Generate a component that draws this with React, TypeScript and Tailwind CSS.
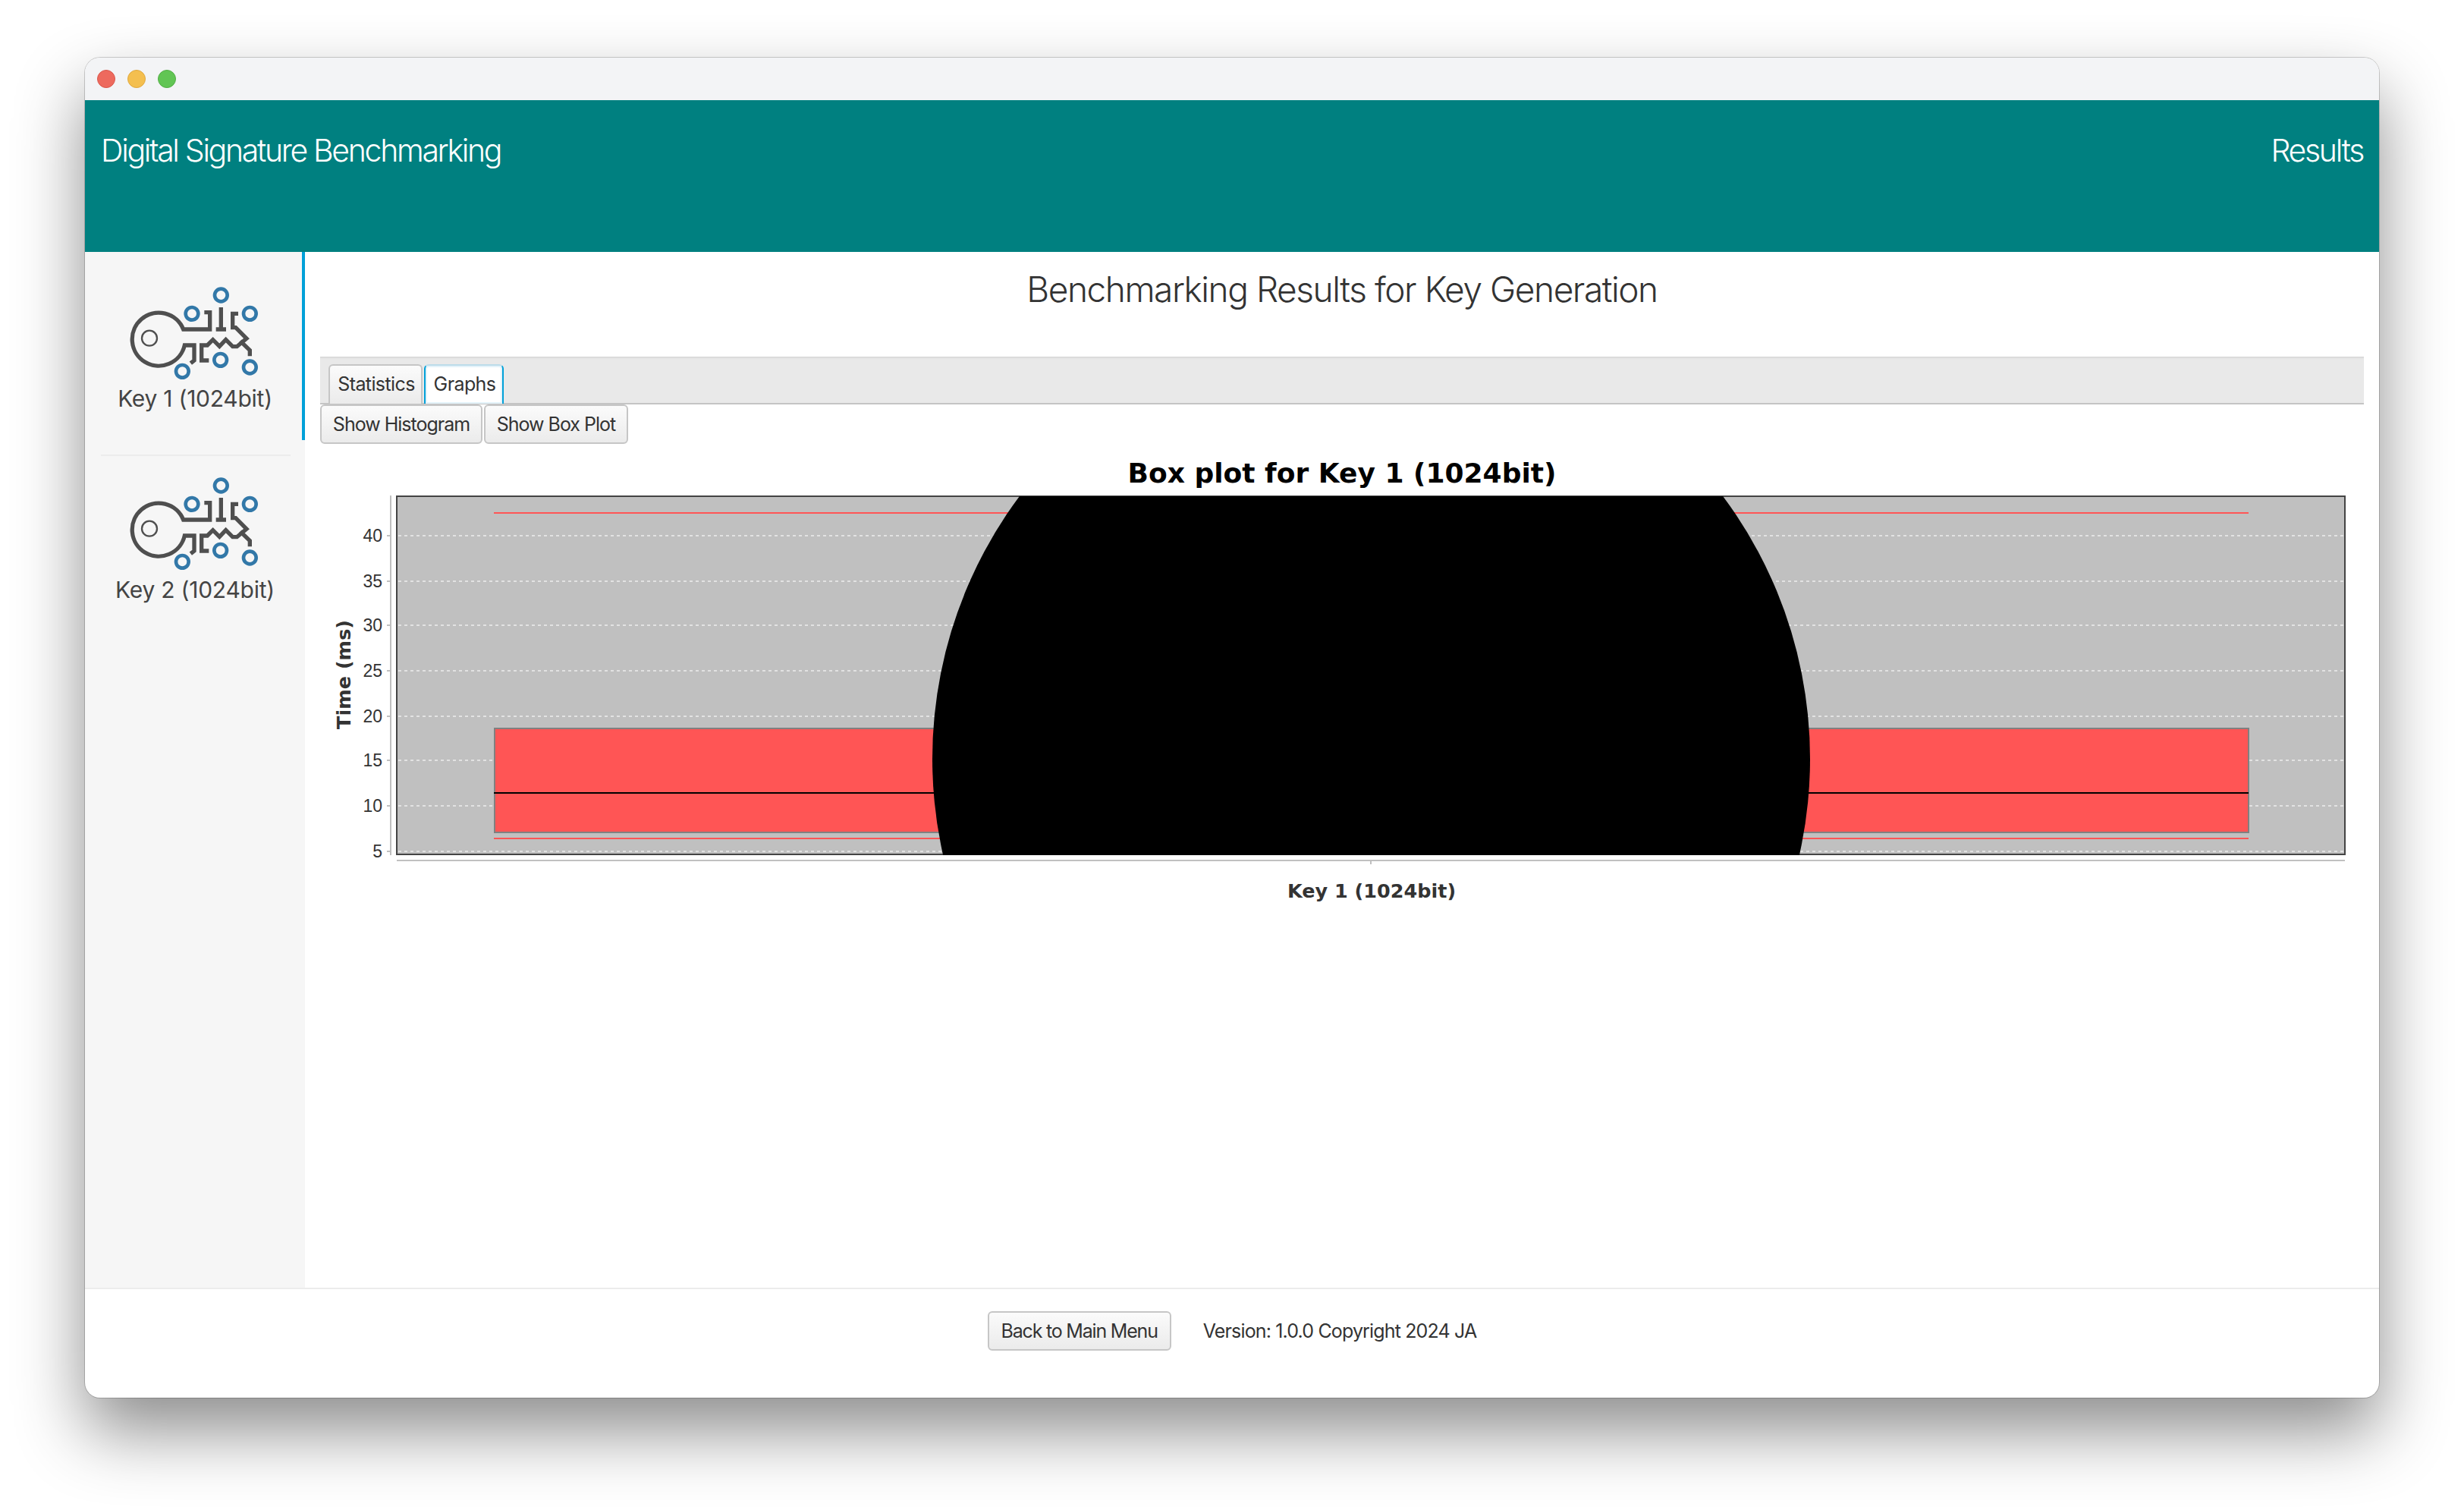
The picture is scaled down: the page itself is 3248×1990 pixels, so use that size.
import React from 'react';

const FONT = "font-['Inter','Noto_Sans',sans-serif]";

function KeyIcon() {
  const blue = [
    [484, 87],
    [369, 160],
    [598, 160],
    [482, 343],
    [598, 372],
    [331, 388],
  ];
  return (
    <svg className="mr-[14px] shrink-0" width="240" height="170" viewBox="0 0 720 510" fill="none">
      <g stroke="#4f4f4f" strokeWidth="16">
        <path d="M418 155H440V222H335A105 105 0 1 0 340 285H378V345L364 356" />
        <path d="M484 135V222M464 222H504" />
        <path d="M552 160H530V215H542L585 258L547 290H530L503 263L478 289L452 263L430 285H407V345H436" />
        <path d="M560 268L598 305V328" />
      </g>
      <circle cx="201" cy="257" r="30" stroke="#4f4f4f" strokeWidth="7" fill="none" />
      {blue.map(([cx, cy]) => (
        <circle key={`${cx}-${cy}`} cx={cx} cy={cy} r="25" stroke="#3278a8" strokeWidth="14" />
      ))}
    </svg>
  );
}

function ActionButton({ label, className }: { label: string; className?: string }) {
  return (
    <button
      className={`flex h-[52px] items-center justify-center rounded-[6px] border-2 border-[#c6c6c6] bg-gradient-to-b from-[#fbfbfb] to-[#ebebeb] pt-[1px] text-[25px] text-[#333] ${className ?? ''}`}
    >
      {label}
    </button>
  );
}

function BoxPlot() {
  const ticks = [
    { label: '40', y: 706 },
    { label: '35', y: 766 },
    { label: '30', y: 824 },
    { label: '25', y: 884 },
    { label: '20', y: 944 },
    { label: '15', y: 1002 },
    { label: '10', y: 1062 },
    { label: '5', y: 1122 },
  ];
  return (
    <svg className="mt-[5px] block" width="2694" height="620" viewBox="422 590 2694 620">
      <defs>
        <clipPath id="plot-area">
          <rect x="523" y="654" width="2568" height="473" />
        </clipPath>
      </defs>
      <text
        x="1769"
        y="636"
        textAnchor="middle"
        fontFamily="DejaVu Sans"
        fontWeight="700"
        fontSize="36"
        fill="#000"
      >
        Box plot for Key 1 (1024bit)
      </text>

      <rect x="523" y="654" width="2568" height="472" fill="#c0c0c0" stroke="#444" strokeWidth="2" />
      {ticks.map((t) => (
        <g key={t.label}>
          <line x1="525" x2="3089" y1={t.y} y2={t.y} stroke="#e2e2e2" strokeWidth="2" strokeDasharray="4 4" />
          <line x1="510" x2="515" y1={t.y} y2={t.y} stroke="#c0c0c0" strokeWidth="2" />
          <text x="504" y={t.y + 8} textAnchor="end" fontFamily="Liberation Sans" fontSize="23" fill="#333">
            {t.label}
          </text>
        </g>
      ))}
      <line x1="515" x2="515" y1="653" y2="1127" stroke="#c0c0c0" strokeWidth="2" />
      <line x1="523" x2="3091" y1="1134" y2="1134" stroke="#c0c0c0" strokeWidth="2" />
      <line x1="1807" x2="1807" y1="1134" y2="1139" stroke="#c0c0c0" strokeWidth="2" />

      <line x1="651" x2="2964" y1="676" y2="676" stroke="#ff5555" strokeWidth="2" />
      <line x1="651" x2="2964" y1="1105" y2="1105" stroke="#ff5555" strokeWidth="2" />
      <rect x="652" y="960" width="2312" height="137" fill="#ff5555" stroke="#808080" strokeWidth="2" />
      <line x1="651" x2="2964" y1="1045" y2="1045" stroke="#000" strokeWidth="2" />
      <circle cx="1807.5" cy="1000" r="578.5" fill="#000" clipPath="url(#plot-area)" />

      <text
        transform="translate(462 889) rotate(-90)"
        textAnchor="middle"
        fontFamily="DejaVu Sans"
        fontWeight="700"
        fontSize="25.5"
        fill="#333"
      >
        Time (ms)
      </text>
      <text
        x="1808"
        y="1183"
        textAnchor="middle"
        fontFamily="DejaVu Sans"
        fontWeight="700"
        fontSize="25.5"
        fill="#333"
      >
        Key 1 (1024bit)
      </text>
    </svg>
  );
}

export default function App() {
  return (
    <div className={`h-[1990px] w-[3248px] bg-white pl-[112px] pt-[76px] ${FONT}`}>
      <div className="flex h-[1766px] w-[3024px] flex-col overflow-hidden rounded-[20px] bg-white shadow-[0_0_0_1px_rgba(0,0,0,0.18),0_44px_90px_rgba(0,0,0,0.45)]">
        {/* Title bar */}
        <div className="flex h-[56px] shrink-0 items-center gap-4 bg-[#f3f4f6] pl-4">
          <div className="h-6 w-6 rounded-full border border-[#d9574c] bg-[#ed6a5e]" />
          <div className="h-6 w-6 rounded-full border border-[#dfa83f] bg-[#f4bf4f]" />
          <div className="h-6 w-6 rounded-full border border-[#52ae46] bg-[#61c554]" />
        </div>

        {/* Header */}
        <div className="flex h-[200px] shrink-0 items-start justify-between bg-[#008080] px-[21px] pt-[41px] text-[41px] font-light leading-[50px] tracking-[-2.33px] text-white">
          <span>Digital Signature Benchmarking</span>
          <span>Results</span>
        </div>

        <div className="flex min-h-0 flex-1">
          {/* Sidebar */}
          <div className="flex w-[290px] shrink-0 flex-col bg-[#f6f6f6]">
            <div className="flex h-[248px] flex-col items-center border-r-4 border-[#00a0d8] pl-1 pt-[28px] text-[30px] leading-[36px] tracking-[-0.25px] text-[#444]">
              <KeyIcon />
              <span className="-mt-[23px]">Key 1 (1024bit)</span>
            </div>
            <div className="ml-[21px] mr-[19px] mt-[19px] h-[2px] shrink-0 bg-[#ececec]" />
            <div className="flex flex-col items-center px-1 pt-[10px] text-[30px] leading-[36px] tracking-[-0.25px] text-[#444]">
              <KeyIcon />
              <span className="-mt-[22px]">Key 2 (1024bit)</span>
            </div>
          </div>

          {/* Results */}
          <div className="min-w-0 flex-1 px-5">
            <h1 className="pt-[21px] text-center text-[46px] font-light leading-[56px] tracking-[-1.45px] text-[#333]">
              Benchmarking Results for Key Generation
            </h1>
            <div className="mt-[61px] flex h-[63px] items-end gap-[2px] border-b-2 border-[#c4c4c4] bg-[#e9e9e9] pl-[11px] shadow-[inset_0_3px_3px_-2px_rgba(0,0,0,0.12)]">
              <div className="relative -mb-[1px] flex h-[52px] w-[124px] items-center justify-center rounded-t-[6px] border-2 border-b-0 border-[#c6c6c6] bg-gradient-to-b from-[#fbfbfb] to-[#ebebeb] pl-[2px] text-[25px] tracking-[-0.6px] text-[#333]">
                Statistics
              </div>
              <div className="relative -mb-[1px] flex h-[52px] w-[105px] items-center justify-center rounded-t-[6px] border-2 border-b-0 border-x-[#00a0d8] border-t-[#bcdcea] bg-white pl-[2px] text-[25px] tracking-[-0.6px] text-[#333] shadow-[inset_0_0_0_2px_#e4f3fa]">
                Graphs
              </div>
            </div>
            <div className="flex gap-[2px]">
              <ActionButton label="Show Histogram" className="w-[214px] tracking-[-1px]" />
              <ActionButton label="Show Box Plot" className="w-[190px] tracking-[-1px]" />
            </div>
            <BoxPlot />
          </div>
        </div>

        {/* Footer */}
        <div className="flex h-[145px] shrink-0 items-start justify-center gap-[42px] border-t-2 border-[#ececec] pt-[29px]">
          <ActionButton label="Back to Main Menu" className="w-[242px] tracking-[-1.2px]" />
          <span className="pt-[8px] text-[25px] tracking-[-0.85px] text-[#333]">Version: 1.0.0 Copyright 2024 JA</span>
        </div>
      </div>
    </div>
  );
}
